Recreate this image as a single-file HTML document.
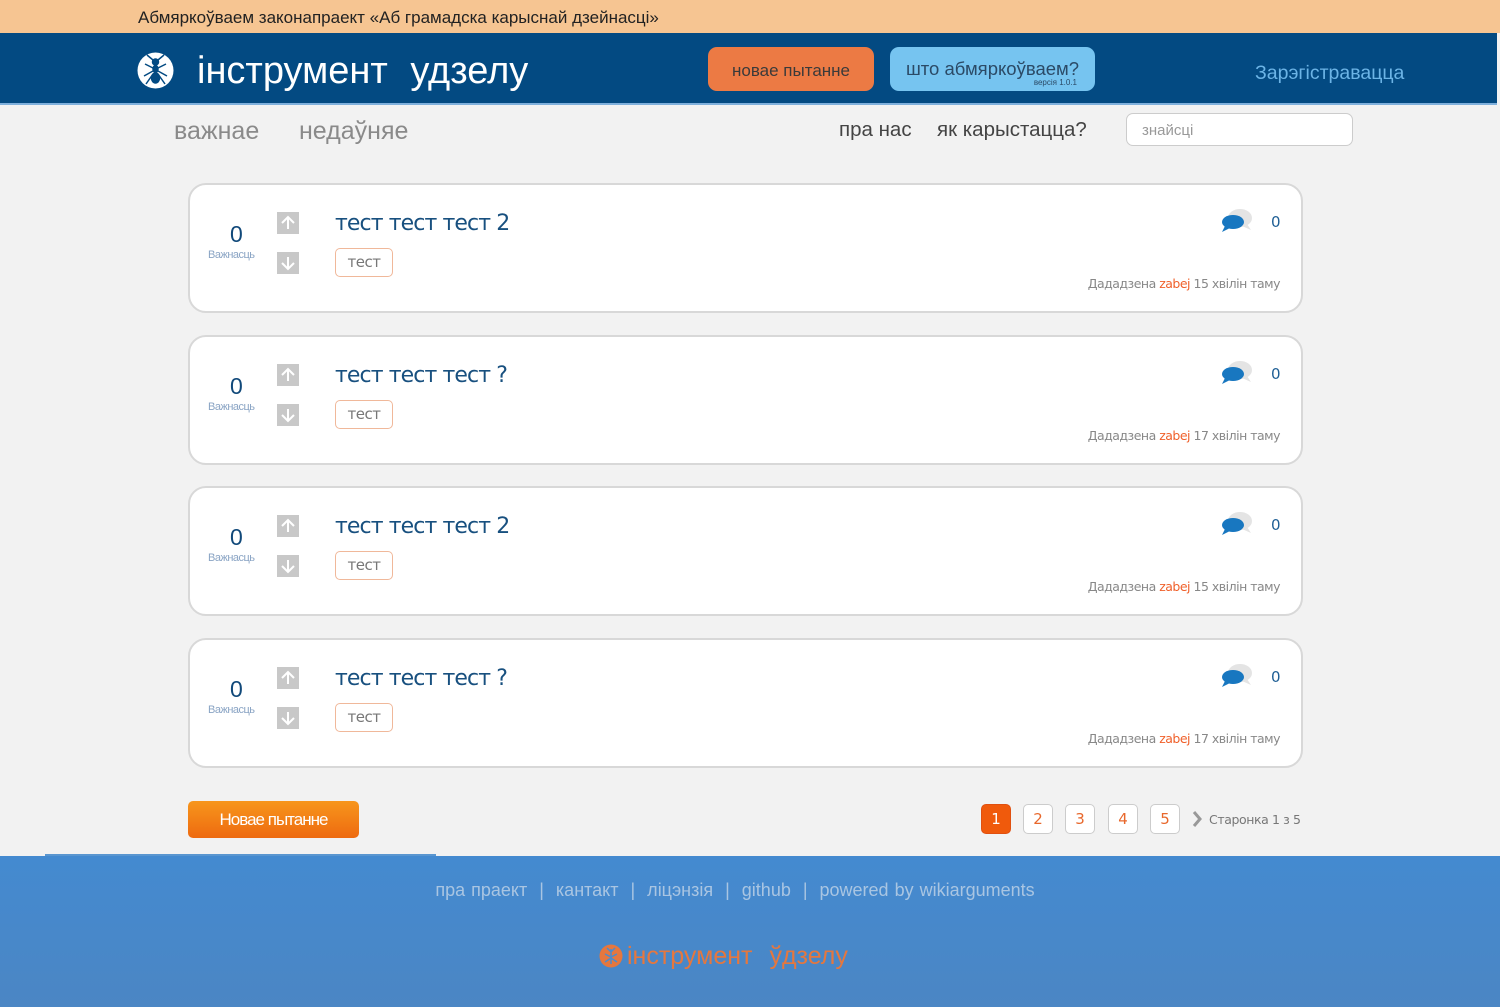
<!DOCTYPE html>
<html><head><meta charset="utf-8">
<style>
*{margin:0;padding:0;box-sizing:border-box}
html,body{width:1500px;height:1007px;overflow:hidden;background:#f2f2f2;font-family:"Liberation Sans",sans-serif;position:relative}
.abs{position:absolute}
#top{left:0;top:0;width:1500px;height:33px;background:#f6c592;}
#top span{position:absolute;left:138px;top:8px;font-size:17px;color:#222}
#hdr{left:0;top:33px;width:1497px;height:72px;background:#034a82;border-bottom:2px solid #7fb0dc}
.card{position:absolute;left:188px;width:1115px;height:130px;background:#fff;border:2px solid #d8d8d8;border-radius:18px}
.card .num{position:absolute;left:40px;top:36px;font-size:23px;color:#11497a}
.card .lbl{position:absolute;left:18px;top:64px;font-size:11px;color:#8aa4c4;letter-spacing:-0.5px}
.card .up,.card .dn{position:absolute;left:87px;width:22px;height:22px;background:#c8c8c8}
.card .up{top:27px}.card .dn{top:67px}
.card .t{position:absolute;left:145px;top:26px;font-size:22px;color:#18507f;font-family:"DejaVu Sans",sans-serif;letter-spacing:-0.9px}
.card .tag{position:absolute;left:145px;top:63px;width:58px;height:29px;border:1px solid #f0b89a;border-radius:5px;font-size:15px;color:#777;text-align:center;line-height:27px;font-family:"DejaVu Sans",sans-serif;letter-spacing:-0.5px}
.card .cnt{position:absolute;left:1081px;top:28px;font-size:15px;color:#1f5f95;font-family:"DejaVu Sans",sans-serif}
.card .meta{position:absolute;right:21px;top:91px;font-size:12.5px;color:#888;font-family:"DejaVu Sans",sans-serif;letter-spacing:-0.5px}
.card .meta b{font-weight:normal;color:#f0602a}
.card svg.b{position:absolute;left:1030px;top:22px}
.pg{position:absolute;top:804px;width:30px;height:30px;border:1px solid #ccc;border-radius:5px;background:#fff;color:#e8682c;font-size:15px;text-align:center;line-height:28px;font-family:"DejaVu Sans",sans-serif}
</style></head><body>
<div id="top" class="abs"><span>Абмяркоўваем законапраект «Аб грамадска карыснай дзейнасці»</span></div>
<div id="hdr" class="abs">
 <svg class="abs" style="left:137px;top:19px" width="37" height="37" viewBox="0 0 37 37"><circle cx="18.5" cy="18.5" r="18" fill="#fff"/><g fill="#034a82" stroke="#034a82" stroke-width="1.5"><ellipse cx="18.5" cy="10" rx="3" ry="3"/><ellipse cx="18.5" cy="17" rx="2.5" ry="3.5"/><ellipse cx="18.5" cy="26" rx="4" ry="5"/><path d="M16 8 L10 3 M21 8 L27 3 M16 16 L8 12 M21 16 L29 12 M16 19 L7 24 M21 19 L30 24 M16 22 L9 32 M21 22 L28 32" fill="none"/></g></svg>
 <div class="abs" style="left:197px;top:17px;font-size:38px;color:#fff;word-spacing:12px">інструмент удзелу</div>
 <div class="abs" style="left:708px;top:14px;width:166px;height:44px;background:#ec7a44;border-radius:9px;color:#3a3a3a;font-size:17px;text-align:center;line-height:48px">новае пытанне</div>
 <div class="abs" style="left:890px;top:14px;width:205px;height:44px;background:#76c4f0;border-radius:9px;color:#2b4a66;font-size:18.5px;text-align:center;padding-top:11px">што абмяркоўваем?<div style="position:absolute;right:18px;top:31px;font-size:8px">версія 1.0.1</div></div>
 <div class="abs" style="left:1255px;top:29px;font-size:19.5px;color:#6cb4e6">Зарэгістравацца</div>
</div>
<div class="abs" style="left:174px;top:117px;font-size:25px;color:#8a8a8a">важнае</div>
<div class="abs" style="left:299px;top:117px;font-size:25px;color:#8a8a8a">недаўняе</div>
<div class="abs" style="left:839px;top:118px;font-size:20.5px;color:#444">пра нас</div>
<div class="abs" style="left:937px;top:118px;font-size:20.5px;color:#444">як карыстацца?</div>
<div class="abs" style="left:1126px;top:113px;width:227px;height:33px;background:#fff;border:1px solid #ccc;border-radius:7px;font-size:15px;color:#999;padding:8px 0 0 15px">знайсці</div>

<div class="card" style="top:183px"><div class="num">0</div><div class="lbl">Важнасць</div>
<div class="up"><svg width="22" height="22"><path d="M11 17V5M5 11l6-6 6 6" stroke="#fff" stroke-width="2" fill="none"/></svg></div>
<div class="dn"><svg width="22" height="22"><path d="M11 5v12M5 11l6 6 6-6" stroke="#fff" stroke-width="2" fill="none"/></svg></div>
<div class="t">тест тест тест 2</div><div class="tag">тест</div>
<svg class="b" width="34" height="28"><ellipse cx="20" cy="11" rx="12" ry="9" fill="#e4e4e4"/><path d="M27 17l4 6-9-4z" fill="#e4e4e4"/><ellipse cx="13" cy="15" rx="11" ry="7" fill="#1877c0"/><path d="M5 19l-3 6 8-4z" fill="#1877c0"/></svg>
<div class="cnt">0</div><div class="meta">Дададзена <b>zabej</b> 15 хвілін таму</div></div>

<div class="card" style="top:335px"><div class="num">0</div><div class="lbl">Важнасць</div>
<div class="up"><svg width="22" height="22"><path d="M11 17V5M5 11l6-6 6 6" stroke="#fff" stroke-width="2" fill="none"/></svg></div>
<div class="dn"><svg width="22" height="22"><path d="M11 5v12M5 11l6 6 6-6" stroke="#fff" stroke-width="2" fill="none"/></svg></div>
<div class="t">тест тест тест ?</div><div class="tag">тест</div>
<svg class="b" width="34" height="28"><ellipse cx="20" cy="11" rx="12" ry="9" fill="#e4e4e4"/><path d="M27 17l4 6-9-4z" fill="#e4e4e4"/><ellipse cx="13" cy="15" rx="11" ry="7" fill="#1877c0"/><path d="M5 19l-3 6 8-4z" fill="#1877c0"/></svg>
<div class="cnt">0</div><div class="meta">Дададзена <b>zabej</b> 17 хвілін таму</div></div>

<div class="card" style="top:486px"><div class="num">0</div><div class="lbl">Важнасць</div>
<div class="up"><svg width="22" height="22"><path d="M11 17V5M5 11l6-6 6 6" stroke="#fff" stroke-width="2" fill="none"/></svg></div>
<div class="dn"><svg width="22" height="22"><path d="M11 5v12M5 11l6 6 6-6" stroke="#fff" stroke-width="2" fill="none"/></svg></div>
<div class="t">тест тест тест 2</div><div class="tag">тест</div>
<svg class="b" width="34" height="28"><ellipse cx="20" cy="11" rx="12" ry="9" fill="#e4e4e4"/><path d="M27 17l4 6-9-4z" fill="#e4e4e4"/><ellipse cx="13" cy="15" rx="11" ry="7" fill="#1877c0"/><path d="M5 19l-3 6 8-4z" fill="#1877c0"/></svg>
<div class="cnt">0</div><div class="meta">Дададзена <b>zabej</b> 15 хвілін таму</div></div>

<div class="card" style="top:638px"><div class="num">0</div><div class="lbl">Важнасць</div>
<div class="up"><svg width="22" height="22"><path d="M11 17V5M5 11l6-6 6 6" stroke="#fff" stroke-width="2" fill="none"/></svg></div>
<div class="dn"><svg width="22" height="22"><path d="M11 5v12M5 11l6 6 6-6" stroke="#fff" stroke-width="2" fill="none"/></svg></div>
<div class="t">тест тест тест ?</div><div class="tag">тест</div>
<svg class="b" width="34" height="28"><ellipse cx="20" cy="11" rx="12" ry="9" fill="#e4e4e4"/><path d="M27 17l4 6-9-4z" fill="#e4e4e4"/><ellipse cx="13" cy="15" rx="11" ry="7" fill="#1877c0"/><path d="M5 19l-3 6 8-4z" fill="#1877c0"/></svg>
<div class="cnt">0</div><div class="meta">Дададзена <b>zabej</b> 17 хвілін таму</div></div>

<div class="abs" style="left:188px;top:801px;width:171px;height:37px;border-radius:5px;background:linear-gradient(#f7961c,#ee6a10);color:#fff;font-size:17px;text-align:center;line-height:37px;letter-spacing:-1px">Новае пытанне</div>
<div class="pg" style="left:981px;background:#f05a0c;border-color:#e05010;color:#fff">1</div>
<div class="pg" style="left:1023px">2</div>
<div class="pg" style="left:1065px">3</div>
<div class="pg" style="left:1108px">4</div>
<div class="pg" style="left:1150px">5</div>
<svg class="abs" style="left:1191px;top:810px" width="12" height="18"><path d="M3 2l6 7-6 7" stroke="#999" stroke-width="3" fill="none"/></svg>
<div class="abs" style="left:1209px;top:812px;font-size:12.5px;color:#777;font-family:'DejaVu Sans',sans-serif;letter-spacing:-0.4px">Старонка 1 з 5</div>

<div class="abs" style="left:0;top:856px;width:1500px;height:151px;background:linear-gradient(#448ad0,#4b86c4)"></div>
<div class="abs" style="left:45px;top:854px;width:391px;height:2px;background:#5a96d0"></div>
<div class="abs" style="left:0;top:880px;width:1470px;text-align:center;font-size:18px;color:#a9c5e2;word-spacing:1px">пра праект &nbsp;|&nbsp; кантакт &nbsp;|&nbsp; ліцэнзія &nbsp;|&nbsp; github &nbsp;|&nbsp; powered by wikiarguments</div>
<svg class="abs" style="left:599px;top:944px" width="24" height="24" viewBox="0 0 24 24"><circle cx="12" cy="12" r="11.5" fill="#e5773e"/><path d="M12 5v15M8 4l4 4 4-4M6 10l6 3 6-3M6 18l6-4 6 4" stroke="#4a8ccf" stroke-width="1.5" fill="none"/></svg>
<div class="abs" style="left:627px;top:942px;font-size:25px;color:#e5773e;word-spacing:10px">інструмент ўдзелу</div>
</body></html>
